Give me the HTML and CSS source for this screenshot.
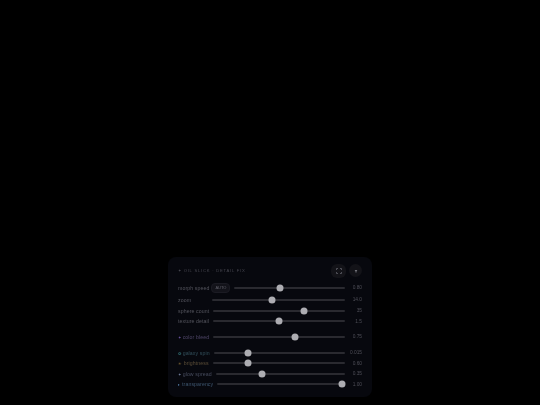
FILE: index.html
```html
<!DOCTYPE html>
<html>
<head>
<meta charset="utf-8">
<link rel="stylesheet" href="styles.css">
</head>
<body>
<div class="panel">
  <div class="head">
    <div class="title"><span class="dot">✦</span> OIL SLICK · DETAIL FIX</div>
    <div class="btns">
      <div class="btn"><svg width="6" height="6" viewBox="0 0 6 6"><path d="M0.5 2V.5H2M4 .5H5.5V2M5.5 4V5.5H4M2 5.5H.5V4" fill="none" stroke="#6a6a72" stroke-width=".7"/></svg></div>
      <div class="btn round"><svg width="4" height="4" viewBox="0 0 4 4"><path d="M.6 1h2.8L2.5 2.2v1.3h-1V2.2z" fill="#77777f"/></svg></div>
    </div>
  </div>
  <div class="group first">
    <div class="row"><span class="lbl">morph speed</span><span class="auto">AUTO</span><div class="track"><i class="knob" style="left:41%"></i></div><span class="val">0.80</span></div>
    <div class="row r12"><span class="lbl wide">zoom</span><div class="track"><i class="knob" style="left:45%"></i></div><span class="val">14.0</span></div>
    <div class="row"><span class="lbl">sphere count</span><div class="track"><i class="knob" style="left:69%"></i></div><span class="val">35</span></div>
    <div class="row"><span class="lbl">texture detail</span><div class="track"><i class="knob" style="left:49.6%"></i></div><span class="val">1.5</span></div>
  </div>
  <div class="group single">
    <div class="row"><span class="lbl purple"><b>✦</b> color bleed</span><div class="track"><i class="knob" style="left:62%"></i></div><span class="val">0.75</span></div>
  </div>
  <div class="group last">
    <div class="row"><span class="lbl teal"><b>❂</b> galaxy spin</span><div class="track"><i class="knob" style="left:26.3%"></i></div><span class="val">0.015</span></div>
    <div class="row"><span class="lbl amber"><b>☀</b> brightness</span><div class="track"><i class="knob" style="left:26.5%"></i></div><span class="val">0.60</span></div>
    <div class="row"><span class="lbl slate"><b>✦</b> glow spread</span><div class="track"><i class="knob" style="left:36%"></i></div><span class="val">0.35</span></div>
    <div class="row"><span class="lbl blue"><b>◐</b> transparency</span><div class="track"><i class="knob" style="left:98%"></i></div><span class="val">1.00</span></div>
  </div>
</div>
</body>
</html>
```
FILE: styles.css
```css
html, body {
  margin: 0;
  height: 405px;
  background: #000;
  overflow: hidden;
}
body {
  display: flex;
  justify-content: center;
  align-items: flex-end;
  padding-bottom: 8px;
  box-sizing: border-box;
  font-family: "Liberation Sans", sans-serif;
}
.panel {
  width: 204px;
  height: 140px;
  box-sizing: border-box;
  background: #07080e;
  border-radius: 8px;
  padding: 6px 10px 0 10px;
  color: #55555e;
  font-size: 5.2px;
  filter: blur(.3px);
}
.head {
  display: flex;
  justify-content: space-between;
  align-items: center;
  height: 15px;
  margin-bottom: 3.5px;
}
.title {
  color: #474750;
  letter-spacing: .75px;
  font-size: 4.2px;
}
.dot { font-size: 3.5px; }
.btns { display: flex; gap: 3px; align-items: center; }
.btn {
  width: 15px;
  height: 14px;
  border-radius: 6px;
  background: #131318;
  display: flex;
  align-items: center;
  justify-content: center;
}
.btn.round { width: 13px; height: 13px; border-radius: 50%; }
.group { display: flex; flex-direction: column; gap: 0; }
.row {
  display: flex;
  align-items: center;
  height: 10.6px;
  gap: 4px;
}
.first .row:first-child { height: 12px; }
.r12 { height: 12px !important; }
.single { margin-top: 5px; }
.last { margin-top: 5px; }
.lbl { white-space: nowrap; letter-spacing: .1px; }
.wide { min-width: 30px; }
.lbl b { font-weight: 400; font-size: 4px; }
.purple { color: #4f4668; }
.purple b { color: #6a52a0; }
.teal { color: #33505c; }
.teal b { color: #35757a; }
.amber { color: #5c4e38; }
.amber b { color: #8a6e38; }
.slate { color: #474c5e; }
.slate b { color: #6f7a98; }
.blue { color: #3e5670; }
.blue b { color: #6090c0; }
.auto {
  height: 8px;
  line-height: 8px;
  padding: 0 3px;
  margin-left: -2px;
  border-radius: 4px;
  background: #13131a;
  border: .5px solid #1b1b23;
  font-size: 4px;
  color: #62626c;
}
.track {
  position: relative;
  flex: 1;
  height: 2px;
  background: #2a2a30;
  border-radius: 1px;
}
.knob {
  position: absolute;
  top: 50%;
  width: 7px;
  height: 7px;
  border-radius: 50%;
  background: #adadb2;
  transform: translate(-50%, -50%);
}
.val {
  width: 13px;
  text-align: right;
  flex: none;
  color: #4f4f58;
  font-size: 4.8px;
}
```
